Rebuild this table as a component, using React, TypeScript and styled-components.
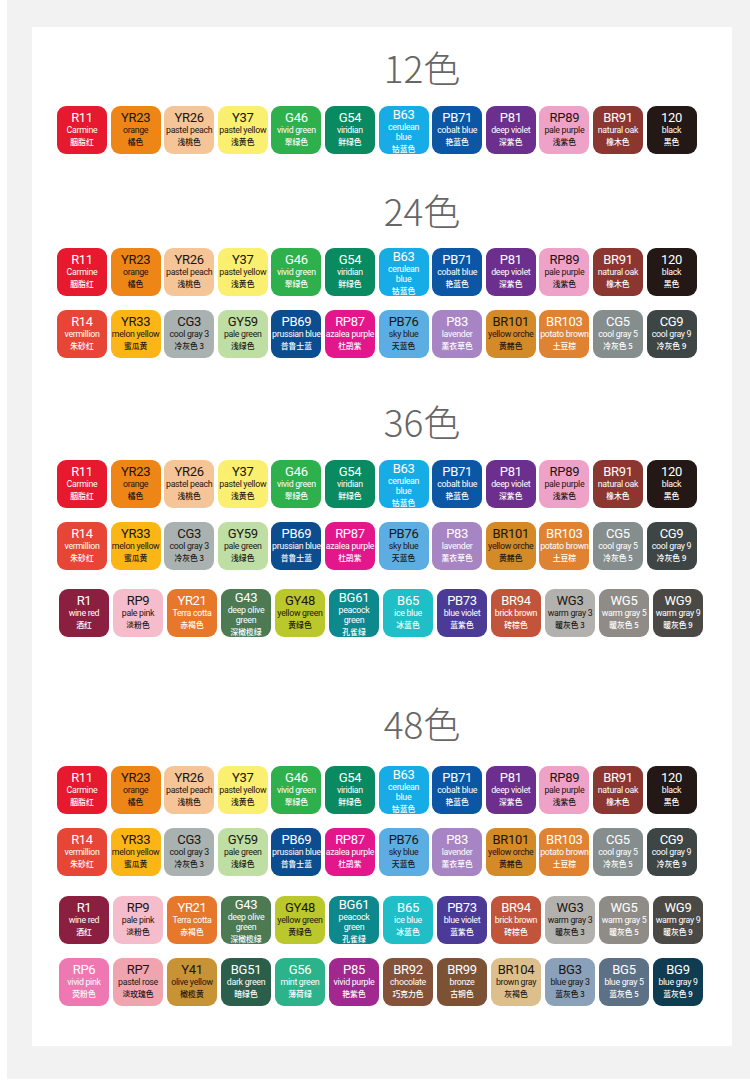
import React from "react";
import styled, { createGlobalStyle } from "styled-components";

type Color = { code: string; en: string[]; zh: string; bg: string; dark?: boolean };

const c = (code: string, en: string | string[], zh: string, bg: string, dark = false): Color => ({
  code,
  en: Array.isArray(en) ? en : [en],
  zh,
  bg,
  dark,
});

const ROW1: Color[] = [
  c("R11", "Carmine", "胭脂红", "#e6192f"),
  c("YR23", "orange", "橘色", "#ee8617", true),
  c("YR26", "pastel peach", "浅桃色", "#f5c597", true),
  c("Y37", "pastel yellow", "浅黄色", "#fbef6f", true),
  c("G46", "vivid green", "翠绿色", "#2eb04c"),
  c("G54", "viridian", "鲜绿色", "#0a8a60"),
  c("B63", ["cerulean", "blue"], "钴蓝色", "#16ade6"),
  c("PB71", "cobalt blue", "艳蓝色", "#0b57a5"),
  c("P81", "deep violet", "深紫色", "#6c2f8e"),
  c("RP89", "pale purple", "浅紫色", "#eea2c8", true),
  c("BR91", "natural oak", "橡木色", "#8c3631"),
  c("120", "black", "黑色", "#231816"),
];

const ROW2: Color[] = [
  c("R14", "vermillion", "朱砂红", "#e74535"),
  c("YR33", "melon yellow", "蜜瓜黄", "#fbb616", true),
  c("CG3", "cool gray 3", "冷灰色 3", "#a9b2b0", true),
  c("GY59", "pale green", "浅绿色", "#bfdea3", true),
  c("PB69", "prussian blue", "普鲁士蓝", "#0c4d90"),
  c("RP87", "azalea purple", "杜鹃紫", "#e3168b"),
  c("PB76", "sky blue", "天蓝色", "#5caee2", true),
  c("P83", "lavender", "薰衣草色", "#a784c3"),
  c("BR101", "yellow orche", "黄赭色", "#d38a27", true),
  c("BR103", "potato brown", "土豆棕", "#df8333"),
  c("CG5", "cool gray 5", "冷灰色 5", "#858e8d"),
  c("CG9", "cool gray 9", "冷灰色 9", "#3d4545"),
];

const ROW3: Color[] = [
  c("R1", "wine red", "酒红", "#8b1f40"),
  c("RP9", "pale pink", "淡粉色", "#f5bccb", true),
  c("YR21", "Terra cotta", "赤褐色", "#e6772b"),
  c("G43", ["deep olive", "green"], "深橄榄绿", "#4d7a53"),
  c("GY48", "yellow green", "黄绿色", "#bbc82c", true),
  c("BG61", ["peacock", "green"], "孔雀绿", "#0d898e"),
  c("B65", "ice blue", "冰蓝色", "#20bfc8"),
  c("PB73", "blue violet", "蓝紫色", "#4b3b97"),
  c("BR94", "brick brown", "砖棕色", "#c1543a"),
  c("WG3", "warm gray 3", "暖灰色 3", "#b3b1ad", true),
  c("WG5", "warm gray 5", "暖灰色 5", "#8f8c88"),
  c("WG9", "warm gray 9", "暖灰色 9", "#4a4946"),
];

const ROW4: Color[] = [
  c("RP6", "vivid pink", "荧粉色", "#ef78b3"),
  c("RP7", "pastel rose", "淡玫瑰色", "#f0a4b0", true),
  c("Y41", "olive yellow", "橄榄黄", "#c89335", true),
  c("BG51", "dark green", "暗绿色", "#2b5f4b"),
  c("G56", "mint green", "薄荷绿", "#2cb38b"),
  c("P85", "vivid purple", "艳紫色", "#a1288f"),
  c("BR92", "chocolate", "巧克力色", "#835238"),
  c("BR99", "bronze", "古铜色", "#7c5234"),
  c("BR104", "brown gray", "灰褐色", "#dcbf8c", true),
  c("BG3", "blue gray 3", "蓝灰色 3", "#8ba1b9", true),
  c("BG5", "blue gray 5", "蓝灰色 5", "#5c7186"),
  c("BG9", "blue gray 9", "蓝灰色 9", "#0f3c50"),
];

type SectionDef = {
  title: string;
  top: number;
  titleGap: number;
  upper: Color[][];
  lower: Color[][];
  lowerGap: number;
};

const SECTIONS: SectionDef[] = [
  { title: "12色", top: 0, titleGap: 20, upper: [ROW1], lower: [], lowerGap: 0 },
  { title: "24色", top: 37, titleGap: 19, upper: [ROW1, ROW2], lower: [], lowerGap: 0 },
  { title: "36色", top: 44, titleGap: 20, upper: [ROW1, ROW2], lower: [ROW3], lowerGap: 19 },
  { title: "48色", top: 67, titleGap: 24, upper: [ROW1, ROW2], lower: [ROW3, ROW4], lowerGap: 20 },
];

const GlobalStyle = createGlobalStyle`
  html, body { margin: 0; padding: 0; background: #ffffff; }
  body { font-family: Roboto, "Noto Sans CJK SC", sans-serif; }
`;

const Backdrop = styled.div`
  margin-left: 7px;
  background: #f2f2f2;
  padding: 27px 18px 33px 25px;
`;

const Panel = styled.main`
  width: 700px;
  background: #ffffff;
  padding: 21px 0 40px;
  display: flex;
  flex-direction: column;
`;

const Section = styled.section<{ $top: number }>`
  margin-top: ${(p) => p.$top}px;
  display: flex;
  flex-direction: column;
`;

const Title = styled.h2<{ $gap: number }>`
  margin: 0 0 ${(p) => p.$gap}px;
  padding-left: 80px;
  height: 38px;
  text-align: center;
  font-family: "Noto Sans CJK SC", "Noto Sans", sans-serif;
  font-weight: 300;
  font-size: 37px;
  line-height: 38px;
  color: #666666;
`;

const RowGroup = styled.div<{ $wide?: boolean; $gapTop?: number }>`
  display: flex;
  flex-direction: column;
  gap: 14px;
  margin-top: ${(p) => p.$gapTop ?? 0}px;
  padding-left: ${(p) => (p.$wide ? 27 : 25)}px;
`;

const Row = styled.div<{ $wide?: boolean }>`
  display: flex;
  gap: ${(p) => (p.$wide ? 4 : 3.6)}px;
`;

const Swatch = styled.div<{ $bg: string; $dark?: boolean; $tall?: boolean }>`
  width: 50px;
  height: 48px;
  flex: none;
  box-sizing: border-box;
  padding-top: ${(p) => (p.$tall ? 0.5 : 4)}px;
  border-radius: 9px;
  background: ${(p) => p.$bg};
  color: ${(p) => (p.$dark ? "#1c1512" : "#ffffff")};
  display: flex;
  flex-direction: column;
  align-items: center;
  text-align: center;
  white-space: nowrap;
  overflow: hidden;
`;

const Code = styled.div`
  font-family: Roboto, "Liberation Sans", sans-serif;
  font-weight: 400;
  font-size: 13px;
  line-height: 15.3px;
  letter-spacing: -0.3px;
`;

const EnName = styled.div`
  font-family: Roboto, "Liberation Sans", sans-serif;
  font-size: 8.8px;
  line-height: 10.4px;
  letter-spacing: -0.3px;
`;

const ZhName = styled.div`
  font-family: "Noto Sans CJK SC", sans-serif;
  font-size: 7.8px;
  line-height: 11.4px;
  font-weight: 500;
`;

function ColorChip({ color }: { color: Color }) {
  return (
    <Swatch $bg={color.bg} $dark={color.dark} $tall={color.en.length > 1}>
      <Code>{color.code}</Code>
      {color.en.map((line, i) => (
        <EnName key={i}>{line}</EnName>
      ))}
      <ZhName>{color.zh}</ZhName>
    </Swatch>
  );
}

export default function App() {
  return (
    <>
      <GlobalStyle />
      <Backdrop>
        <Panel>
          {SECTIONS.map((s) => (
            <Section key={s.title} $top={s.top}>
              <Title $gap={s.titleGap}>{s.title}</Title>
              <RowGroup>
                {s.upper.map((row, i) => (
                  <Row key={i}>
                    {row.map((col) => (
                      <ColorChip key={col.code} color={col} />
                    ))}
                  </Row>
                ))}
              </RowGroup>
              {s.lower.length > 0 && (
                <RowGroup $wide $gapTop={s.lowerGap}>
                  {s.lower.map((row, i) => (
                    <Row key={i} $wide>
                      {row.map((col) => (
                        <ColorChip key={col.code} color={col} />
                      ))}
                    </Row>
                  ))}
                </RowGroup>
              )}
            </Section>
          ))}
        </Panel>
      </Backdrop>
    </>
  );
}
